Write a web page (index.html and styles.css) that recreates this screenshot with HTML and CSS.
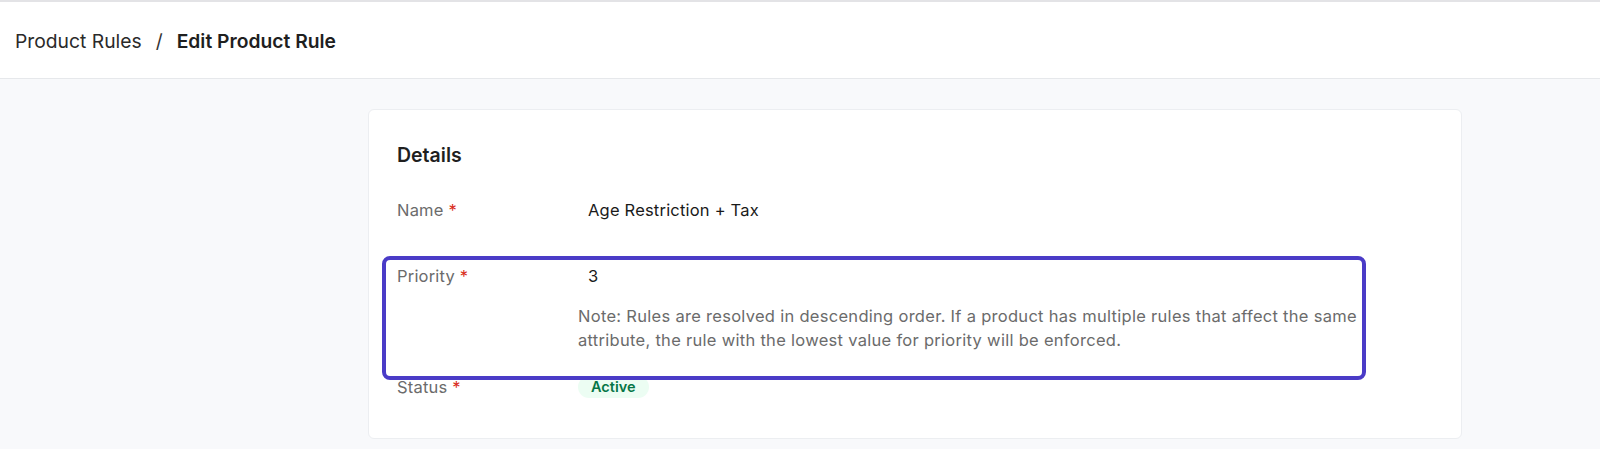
FILE: index.html
```html
<!DOCTYPE html>
<html>
<head>
<meta charset="utf-8">
<link rel="stylesheet" href="styles.css">
</head>
<body>
<header class="topbar">
  <nav class="crumbs">
    <span class="crumb">Product Rules</span>
    <span class="sep">/</span>
    <span class="crumb current">Edit Product Rule</span>
  </nav>
</header>
<main class="main">
  <section class="card">
    <h2 class="card-title">Details</h2>
    <div class="row">
      <div class="label">Name <span class="req">*</span></div>
      <div class="value">Age Restriction + Tax</div>
    </div>
    <div class="highlight-wrap">
      <div class="row">
        <div class="label">Priority <span class="req">*</span></div>
        <div class="value">3</div>
      </div>
      <div class="note-row">
        <div></div>
        <p class="note">Note: Rules are resolved in descending order. If a product has multiple rules that affect the same attribute, the rule with the lowest value for priority will be enforced.</p>
      </div>
      <div class="highlight"></div>
    </div>
    <div class="row status-row">
      <div class="label">Status <span class="req">*</span></div>
      <div class="badge-cell"><span class="badge">Active</span></div>
    </div>
  </section>
</main>
</body>
</html>
```

FILE: styles.css
```css
* { box-sizing: border-box; }
html, body { margin: 0; padding: 0; }
body {
  font-family: Inter, "Noto Sans", sans-serif;
  background: #f8f9fb;
  color: #1d1d1f;
  height: 449px;
  overflow: hidden;
}
.topbar {
  height: 79px;
  background: #fff;
  border-top: 2px solid #e3e3e6;
  border-bottom: 1px solid #e6e8eb;
  display: flex;
  align-items: center;
  padding-left: 15px;
}
.crumbs {
  display: flex;
  align-items: center;
  gap: 14px;
  font-size: 19.3px;
  color: #2a2a2a;
  margin-top: 2px;
}
.crumb.current { font-weight: 600; color: #1f1f1f; }
.sep { color: #333; }
.main {
  padding: 30px 0 0 368px;
}
.card {
  width: 1094px;
  background: #fff;
  border: 1px solid #eceef1;
  border-radius: 6px;
  padding: 33px 28px 31px 28px;
}
.card-title {
  margin: 0 0 23px 0;
  font-size: 19.5px;
  line-height: 24px;
  font-weight: 600;
  color: #1f1f1f;
}
.row {
  display: grid;
  grid-template-columns: 181px 1fr;
  align-items: center;
  height: 40px;
  font-size: 16.5px;
  letter-spacing: 0.2px;
}
.label { color: #6b6b6b; }
.req { color: #d92d20; }
.value {
  padding-left: 10px;
  color: #1a1a1a;
}
.highlight-wrap {
  position: relative;
  margin-top: 26px;
}
.note-row {
  display: grid;
  grid-template-columns: 181px 1fr;
  margin-top: 8px;
}
.note {
  margin: 0;
  max-width: 800px;
  font-size: 16.5px;
  letter-spacing: 0.29px;
  line-height: 24px;
  color: #6b6b6b;
}
.highlight {
  position: absolute;
  top: 0;
  left: -15px;
  right: 67px;
  bottom: -28px;
  border: 4px solid #4a3bc7;
  border-radius: 8px;
}
.status-row { margin-top: 15px; }
.badge {
  display: inline-block;
  background: #ecfdf3;
  color: #067647;
  font-weight: 600;
  font-size: 14.5px;
  line-height: 22px;
  padding: 0 13px;
  border-radius: 12px;
  letter-spacing: 0;
}
```
